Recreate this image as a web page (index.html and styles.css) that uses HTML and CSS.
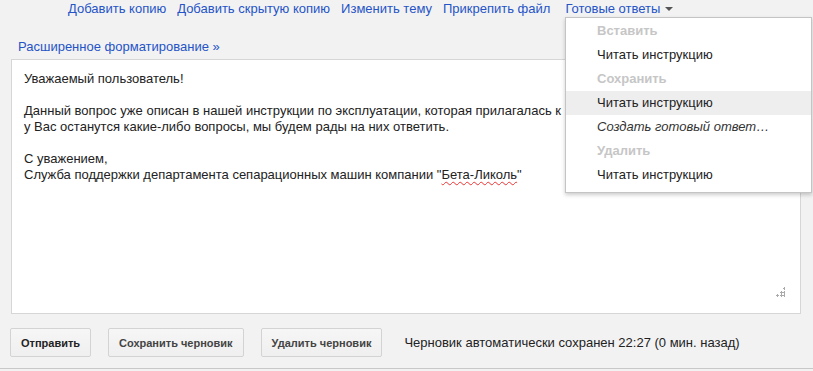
FILE: index.html
```html
<!DOCTYPE html>
<html lang="ru">
<head>
    <title>Ответ</title>
    <link rel="stylesheet" href="styles.css">
</head>
<body>
<div class="compose">
    <div class="toplinks">
        <a href="#">Добавить копию</a>
        <a href="#">Добавить скрытую копию</a>
        <a href="#">Изменить тему</a>
        <a href="#" class="attach">Прикрепить файл</a>
        <a href="#" class="canned">Готовые ответы <span class="arrow"></span></a>
    </div>

    <div class="format">
        <a href="#">Расширенное форматирование &raquo;</a>
    </div>

    <div class="editor">
        <p>Уважаемый пользователь!</p>
        <p>Данный вопрос уже описан в нашей инструкции по эксплуатации, которая прилагалась к <span class="hl"></span><br>
        у Вас останутся какие-либо вопросы, мы будем рады на них ответить.</p>
        <p>С уважением,<br>
        Служба поддержки департамента сепарационных машин компании "<span class="spell">Бета-Ликоль</span>"</p>
        <div class="grip"></div>
    </div>

    <div class="actions">
        <button class="send">Отправить</button>
        <button>Сохранить черновик</button>
        <button>Удалить черновик</button>
        <span class="status">Черновик автоматически сохранен 22:27 (0 мин. назад)</span>
    </div>

    <div class="menu">
        <div class="item head">Вставить</div>
        <div class="item">Читать инструкцию</div>
        <div class="item head">Сохранить</div>
        <div class="item hover">Читать инструкцию</div>
        <div class="item new">Создать готовый ответ…</div>
        <div class="item head">Удалить</div>
        <div class="item">Читать инструкцию</div>
    </div>
</div>
</body>
</html>
```

FILE: styles.css
```css
body{
    margin: 0;
    background-color: #f2f2f2;
    font-family: "Liberation Sans", Arial, sans-serif;
    font-size: 13px;
    color: #222;
}

.compose{
    position: relative;
    height: 368px;
    border-bottom: 1px solid #c8c8c8;
}

a{
    color: #2554c7;
    text-decoration: none;
}

.toplinks{
    display: flex;
    gap: 11px;
    padding: 1px 0 0 68px;
    line-height: 16px;
}

.toplinks .canned{
    margin-left: 4px;
}

.arrow{
    display: inline-block;
    width: 0;
    height: 0;
    margin-left: 1px;
    vertical-align: 2px;
    border-left: 4px solid transparent;
    border-right: 4px solid transparent;
    border-top: 4px solid #555;
}

.format{
    padding: 22px 0 0 18px;
    line-height: 16px;
}

.editor{
    position: relative;
    margin: 4px 0 0 11px;
    width: 790px;
    height: 255px;
    background-color: #fff;
    border: 1px solid #d6d6d6;
    line-height: 16px;
    box-sizing: border-box;
}

.editor p{
    margin: 11px 0 16px 12px;
}

.editor p + p{
    margin-top: 0;
}

.hl{
    display: inline-block;
    width: 3px;
    height: 9px;
    background-color: #f3c696;
}

.spell{
    text-decoration: underline wavy #e33;
    text-decoration-thickness: 1px;
    text-underline-offset: 2px;
}

.grip{
    position: absolute;
    right: 15px;
    bottom: 16px;
    width: 10px;
    height: 10px;
    background:
        radial-gradient(circle, #aaa 1px, transparent 1.2px) 8px 0 / 3px 3px no-repeat,
        radial-gradient(circle, #aaa 1px, transparent 1.2px) 5px 4px / 3px 3px no-repeat,
        radial-gradient(circle, #aaa 1px, transparent 1.2px) 8px 4px / 3px 3px no-repeat,
        radial-gradient(circle, #aaa 1px, transparent 1.2px) 1px 7px / 3px 3px no-repeat,
        radial-gradient(circle, #aaa 1px, transparent 1.2px) 5px 7px / 3px 3px no-repeat,
        radial-gradient(circle, #aaa 1px, transparent 1.2px) 8px 7px / 3px 3px no-repeat;
}

.actions{
    display: flex;
    align-items: center;
    padding: 14px 0 0 10px;
}

button{
    height: 29px;
    padding: 0 10px;
    margin-right: 17px;
    border: 1px solid #d3d3d3;
    border-radius: 2px;
    background: linear-gradient(#f6f6f6, #efefef);
    font-family: "Liberation Sans", Arial, sans-serif;
    font-size: 11px;
    font-weight: bold;
    color: #444;
}

button.send{
    width: 81px;
    color: #222;
}

.status{
    margin-left: 5px;
    color: #222;
}

.menu{
    position: absolute;
    left: 565px;
    top: 17px;
    width: 247px;
    padding: 1px 0 5px;
    background-color: #fff;
    border: 1px solid #c4c4c4;
    box-shadow: 0 2px 4px rgba(0, 0, 0, 0.2);
    box-sizing: border-box;
}

.item{
    height: 24px;
    line-height: 24px;
    padding-left: 31px;
    color: #222;
}

.item.head{
    color: #c6c6c6;
    font-weight: bold;
}

.item.hover{
    background-color: #eee;
}

.item.new{
    font-style: italic;
    color: #333;
}
```
